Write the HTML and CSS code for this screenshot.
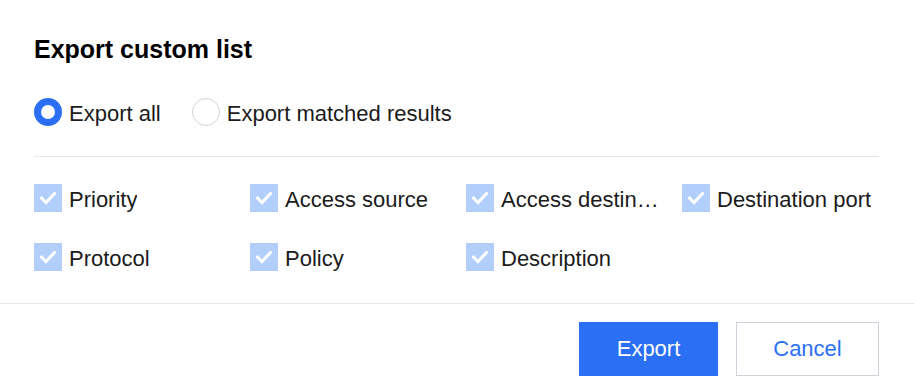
FILE: index.html
```html
<!DOCTYPE html>
<html lang="en">
<head>
    <meta charset="UTF-8">
    <title>Export custom list</title>
    <link rel="stylesheet" href="styles.css">
</head>
<body>
    <div class="export-dialog">
        <div class="dialog-body">
            <h1>Export custom list</h1>

            <div class="radio-group">
                <label class="radio-item">
                    <span class="radio checked"></span>
                    <span class="radio-text">Export all</span>
                </label>
                <label class="radio-item">
                    <span class="radio"></span>
                    <span class="radio-text">Export matched results</span>
                </label>
            </div>

            <div class="divider"></div>

            <div class="field-grid">
                <label class="check-item">
                    <span class="checkbox"><svg width="28" height="28" viewBox="0 0 28 28"><polyline points="7.5,14 12,18.5 20.5,9.5" /></svg></span>
                    <span class="check-text">Priority</span>
                </label>
                <label class="check-item">
                    <span class="checkbox"><svg width="28" height="28" viewBox="0 0 28 28"><polyline points="7.5,14 12,18.5 20.5,9.5" /></svg></span>
                    <span class="check-text">Access source</span>
                </label>
                <label class="check-item">
                    <span class="checkbox"><svg width="28" height="28" viewBox="0 0 28 28"><polyline points="7.5,14 12,18.5 20.5,9.5" /></svg></span>
                    <span class="check-text" title="Access destination">Access destination</span>
                </label>
                <label class="check-item">
                    <span class="checkbox"><svg width="28" height="28" viewBox="0 0 28 28"><polyline points="7.5,14 12,18.5 20.5,9.5" /></svg></span>
                    <span class="check-text">Destination port</span>
                </label>
                <label class="check-item">
                    <span class="checkbox"><svg width="28" height="28" viewBox="0 0 28 28"><polyline points="7.5,14 12,18.5 20.5,9.5" /></svg></span>
                    <span class="check-text">Protocol</span>
                </label>
                <label class="check-item">
                    <span class="checkbox"><svg width="28" height="28" viewBox="0 0 28 28"><polyline points="7.5,14 12,18.5 20.5,9.5" /></svg></span>
                    <span class="check-text">Policy</span>
                </label>
                <label class="check-item">
                    <span class="checkbox"><svg width="28" height="28" viewBox="0 0 28 28"><polyline points="7.5,14 12,18.5 20.5,9.5" /></svg></span>
                    <span class="check-text">Description</span>
                </label>
            </div>
        </div>

        <div class="dialog-footer">
            <button class="btn btn-primary">Export</button>
            <button class="btn btn-default">Cancel</button>
        </div>
    </div>
</body>
</html>
```

FILE: styles.css
```css
body {
    margin: 0;
    background: #fff;
    font-family: 'Liberation Sans', Arial, sans-serif;
    color: #1b1b1b;
}

.export-dialog {
    width: 914px;
    height: 378px;
    overflow: hidden;
}

.dialog-body {
    padding: 37px 35px 0 34px;
}

h1 {
    margin: 0;
    font-size: 25px;
    line-height: 24px;
    font-weight: 700;
    color: #000;
}

.radio-group {
    display: flex;
    gap: 31px;
    margin-top: 37px;
}

.radio-item {
    display: flex;
    align-items: center;
    gap: 7px;
    height: 28px;
    font-size: 22px;
}

.radio-text {
    padding-top: 3px;
}

.radio {
    width: 28px;
    height: 28px;
    box-sizing: border-box;
    border: 1px solid #cfd4dd;
    border-radius: 50%;
    background: #fff;
}

.radio.checked {
    border: 7px solid #2b6ff5;
}

.divider {
    height: 1px;
    background: #e6e6e6;
    margin-top: 30px;
}

.field-grid {
    display: grid;
    grid-template-columns: repeat(4, 216px);
    row-gap: 31px;
    margin-top: 27px;
}

.check-item {
    display: flex;
    align-items: center;
    gap: 7px;
    height: 28px;
    font-size: 22px;
    min-width: 0;
}

.checkbox {
    flex: none;
    width: 28px;
    height: 28px;
    background: #b2cffb;
}

.checkbox svg {
    display: block;
}

.checkbox polyline {
    fill: none;
    stroke: #fff;
    stroke-width: 3;
    stroke-linecap: square;
}

.check-text {
    max-width: 159px;
    padding-top: 4px;
    white-space: nowrap;
    overflow: hidden;
    text-overflow: ellipsis;
}

.dialog-footer {
    margin-top: 32px;
    border-top: 1px solid #e6e6e6;
    padding: 18px 35px 0 0;
    display: flex;
    justify-content: flex-end;
    gap: 18px;
}

.btn {
    height: 54px;
    font-family: inherit;
    font-size: 22px;
    cursor: pointer;
}

.btn-primary {
    width: 139px;
    background: #2b6ff5;
    border: none;
    color: #fff;
}

.btn-default {
    width: 143px;
    background: #fff;
    border: 1px solid #cdd2db;
    color: #2b6ff5;
}
```
